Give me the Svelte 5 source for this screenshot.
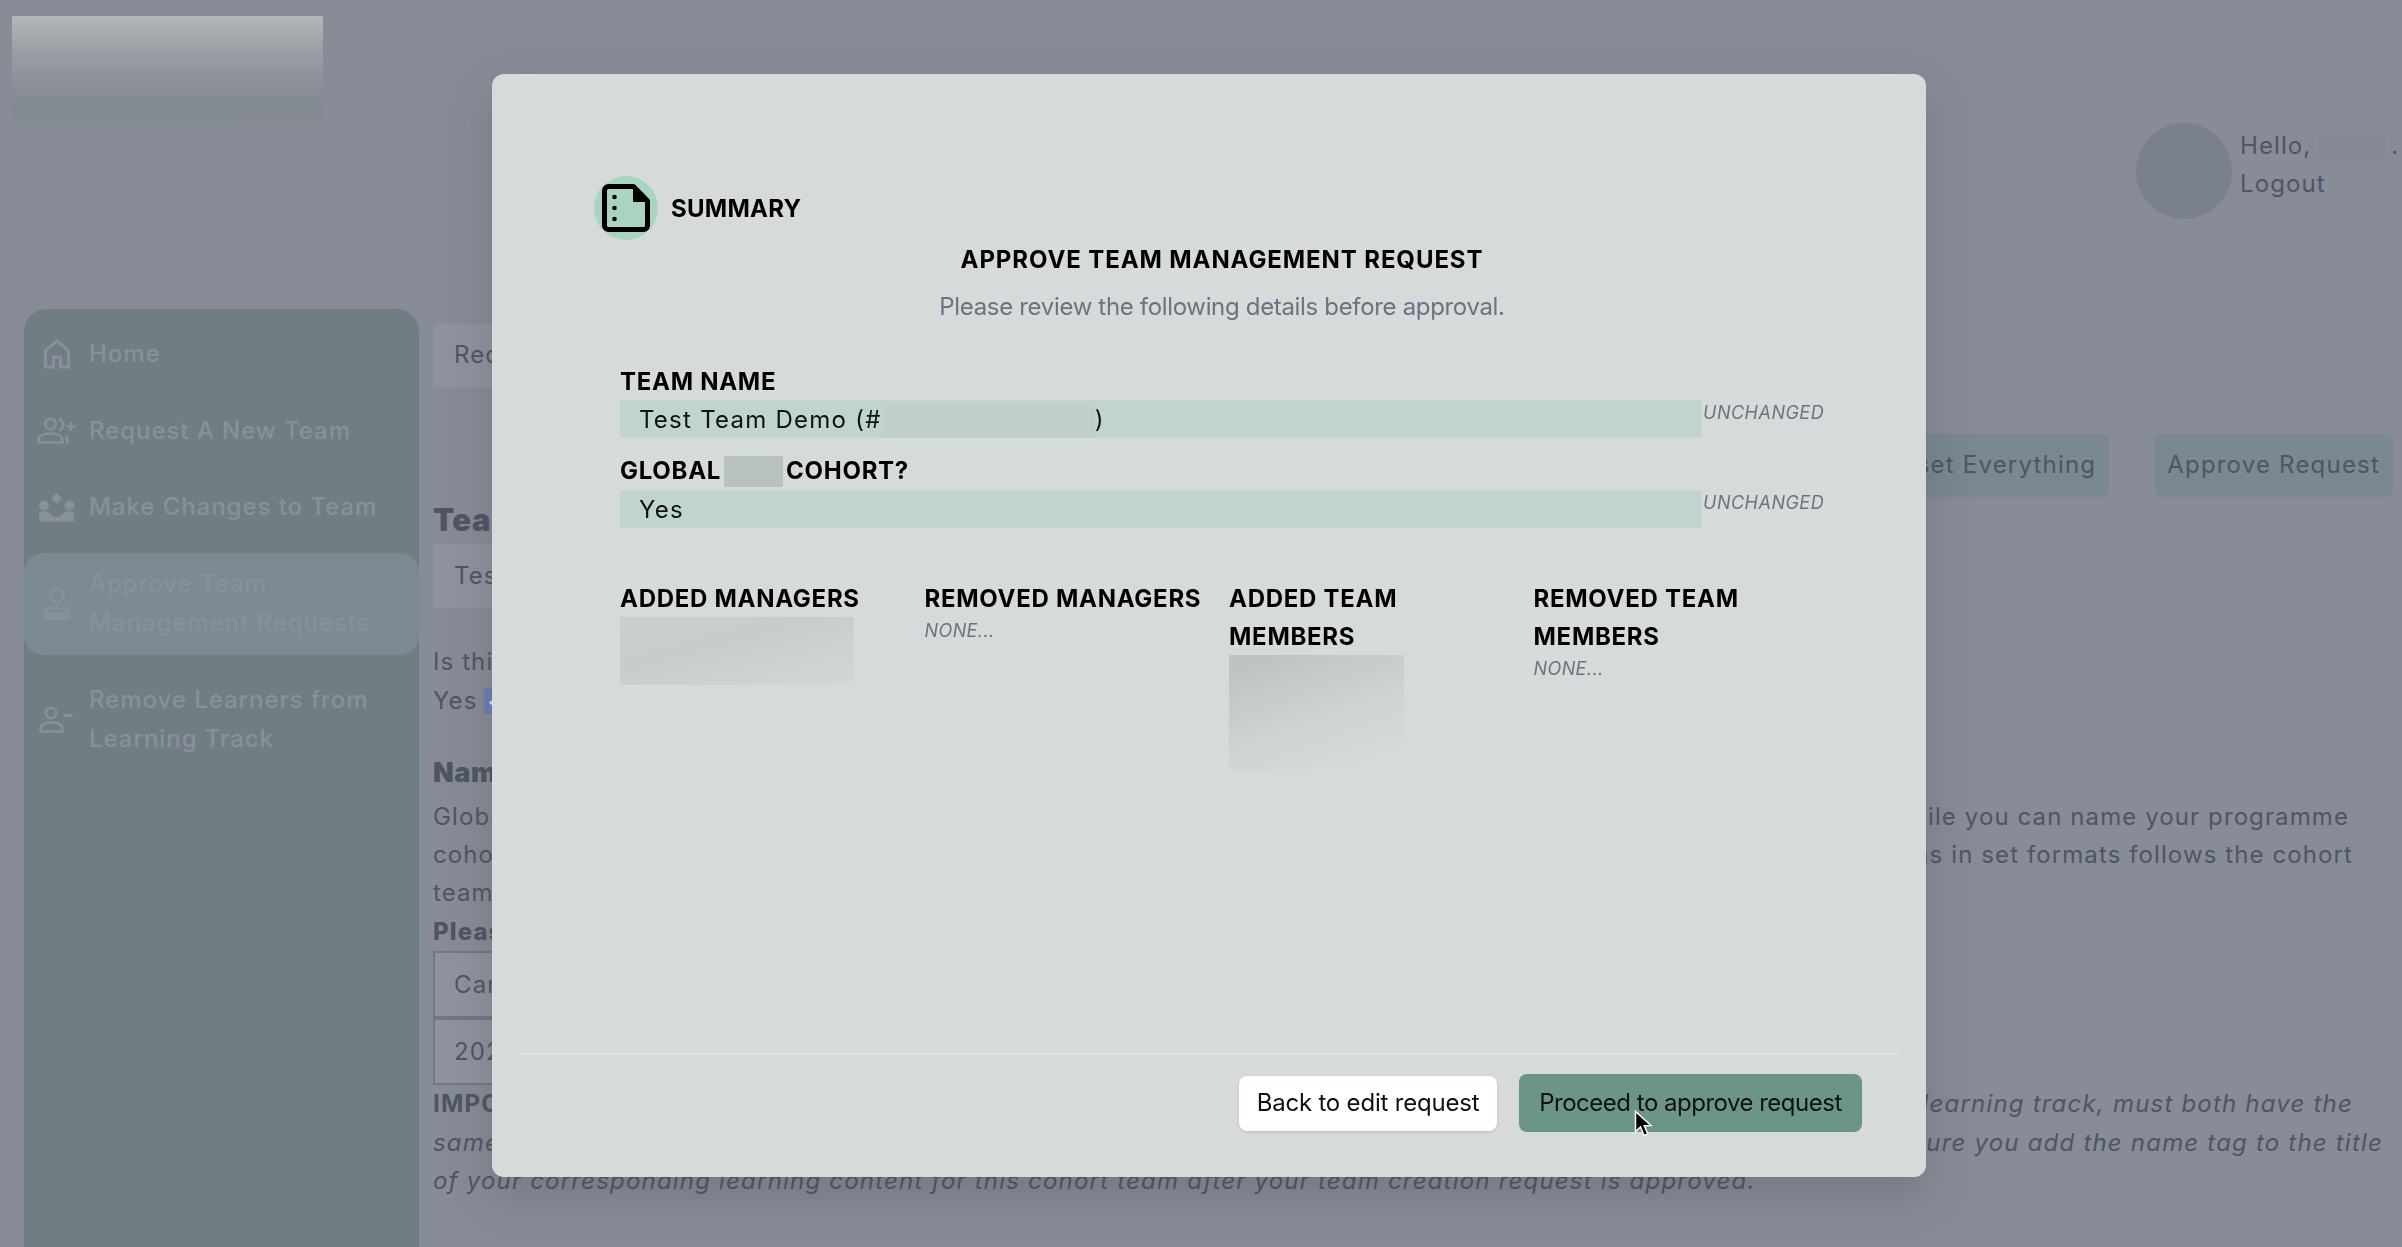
<script>
  const navItems = [
    { label: ['Home'], icon: 'home' },
    { label: ['Request A New Team'], icon: 'add' },
    { label: ['Make Changes to Team'], icon: 'group' },
    { label: ['Approve Team', 'Management Requests'], icon: 'stamp', active: true },
    { label: ['Remove Learners from', 'Learning Track'], icon: 'remove' }
  ];

  const changes = [
    { title: 'ADDED MANAGERS', blur: 'managers' },
    { title: 'REMOVED MANAGERS' },
    { title: 'ADDED TEAM MEMBERS', blur: 'members' },
    { title: 'REMOVED TEAM MEMBERS' }
  ];
</script>

<div class="page">
  <header class="topbar">
    <div class="logo"></div>
    <div class="user">
      <div class="avatar"></div>
      <div class="hello">
        <div class="hello-line">Hello,<span class="name"></span>.</div>
        <div>Logout</div>
      </div>
    </div>
  </header>

  <div class="layout">
    <nav class="sidebar">
      {#each navItems as item}
        <a class="nav-item" class:active={item.active} class:double={item.label.length > 1}>
          <span class="nav-icon">
            {#if item.icon === 'home'}
              <svg width="28" height="30" viewBox="0 0 28 30" fill="none" stroke="currentColor" stroke-width="3"><path d="M2.500 28V11.500L14 2l11.500 9.500V28H17.500V18h-7v10z" /></svg>
            {:else if item.icon === 'add'}
              <svg width="40" height="27" viewBox="0 0 40 27" fill="none" stroke="currentColor" stroke-width="2.600"><circle cx="13.500" cy="7" r="5.200" /><path d="M1.500 25.500v-2c0-4.500 5-7 12-7s12 2.500 12 7v2z" /><path d="M22 1.500c2.500 1 4 3.300 4 6s-1.500 5-4 6M29 19c1 1.500 1.500 3.500 1.500 7.500M33.700 5v9M29.200 9.500h9" /></svg>
            {:else if item.icon === 'group'}
              <svg width="36" height="29" viewBox="0 0 36 29" fill="currentColor"><path d="M17.500 0l5.500 5.500-5.500 5.500-5.500-5.500z" /><circle cx="5" cy="12.500" r="5" /><circle cx="30.500" cy="12.500" r="5" /><path d="M0 28.500v-7c0-2.500 2-3.500 5-3.500 3.500 0 5 1.500 7 3.500 2 1.800 3.700 2.500 5.500 2.500s3.500-.7 5.500-2.500c2-2 3.500-3.500 7-3.500 3 0 5 1 5 3.500v7z" /></svg>
            {:else if item.icon === 'stamp'}
              <svg width="28" height="32" viewBox="0 0 28 32" fill="none" stroke="currentColor" stroke-width="2.600"><path d="M14 15.500c-3-3-6.500-5-6.500-8.500a6.500 6.500 0 0 1 13 0c0 3.500-3.500 5.500-6.500 8.500zM14 15.500v4" /><path d="M2 20.500h24V31H2z" /><path d="M2 27.500h24" stroke-width="6" /></svg>
            {:else}
              <svg width="36" height="27" viewBox="0 0 36 27" fill="none" stroke="currentColor" stroke-width="2.600"><circle cx="12" cy="7" r="5.200" /><path d="M1.500 25.500v-2c0-4.500 4-7 11-7s11 2.500 11 7v2z" /><path d="M24.500 9.500h9" stroke-width="3" /></svg>
            {/if}
          </span>
          <span class="nav-label">
            {#each item.label as line}<span class="nav-line">{line}</span>{/each}
          </span>
        </a>
      {/each}
    </nav>

    <main class="content">
      <div class="field first">Request to manage a team</div>
      <div class="actions">
        <button class="ghost">Reset Everything</button>
        <button class="ghost">Approve Request</button>
      </div>
      <h2>Team Name</h2>
      <div class="field plain">Test Team Demo</div>
      <div class="block">
        <div>Is this a Global cohort team?</div>
        <div class="yes">Yes
          <span class="check">
            <svg width="26" height="26" viewBox="0 0 26 26" fill="none" stroke="#dfe3ee" stroke-width="3"><path d="M6 13.500l5 5 9-10" /></svg>
          </span>
        </div>
      </div>
      <h3>Name Tag</h3>
      <div class="split end-a"><span>Global cohort teams are named in a set format</span><span>while you can name your programme</span></div>
      <div class="split end-b"><span>cohort teams as you like, and naming teams</span><span>teams in set formats follows the cohort</span></div>
      <div>team name.</div>
      <div class="strong">Please select your team details</div>
      <div class="field box">Career Track</div>
      <div class="field box">2024</div>
      <div class="split italic end-d"><strong>IMPORTANT:</strong><em>your team and corresponding learning track, must both have the</em></div>
      <div class="split italic end-c"><em>same name tag to be matched correctly. Please make sure</em><em>sure you add the name tag to the title</em></div>
      <div class="italic"><em>of your corresponding learning content for this cohort team after your team creation request is approved.</em></div>
    </main>
  </div>
</div>

<div class="overlay">
  <section class="modal">
    <div class="modal-body">
      <div class="summary">
        <span class="summary-icon">
          <svg width="48" height="48" viewBox="0 0 48 48" fill="none" stroke="#000" stroke-width="5" stroke-linejoin="round">
            <path d="M6.500 2.500h25L45.500 17v24.500a4 4 0 0 1-4 4h-35a4 4 0 0 1-4-4v-35a4 4 0 0 1 4-4z" />
            <path d="M32 2.500l13.500 14.500H32z" fill="#000" stroke-width="2" />
            <circle cx="12.500" cy="13" r="2.300" fill="#000" stroke="none" />
            <circle cx="12.500" cy="24" r="2.300" fill="#000" stroke="none" />
            <circle cx="12.500" cy="35" r="2.300" fill="#000" stroke="none" />
          </svg>
        </span>
        <span class="summary-title">SUMMARY</span>
      </div>

      <div class="intro">
        <h1>APPROVE TEAM MANAGEMENT REQUEST</h1>
        <p>Please review the following details before approval.</p>
      </div>

      <div class="label first-label">TEAM NAME</div>
      <div class="row">
        <div class="value">Test Team Demo (#<span class="blur-id"></span>)</div>
        <span class="tag">UNCHANGED</span>
      </div>

      <div class="label second-label">GLOBAL<span class="blur-word"></span>COHORT?</div>
      <div class="row">
        <div class="value">Yes</div>
        <span class="tag">UNCHANGED</span>
      </div>

      <div class="columns">
        {#each changes as col}
          <div class="col">
            <div class="label">{col.title}</div>
            {#if col.blur}
              <div class="blur-{col.blur}"></div>
            {:else}
              <div class="none">NONE...</div>
            {/if}
          </div>
        {/each}
      </div>
    </div>

    <footer class="modal-footer">
      <button class="btn-back">Back to edit request</button>
      <button class="btn-go">Proceed to approve request</button>
    </footer>
  </section>

  <svg class="cursor" width="20" height="28" viewBox="0 0 20 28">
    <path d="M1.500 1.500v20l5-4.500 3.500 8.500 3.800-1.600-3.500-8.200 6.700-.2z" fill="#000" stroke="#fff" stroke-width="1.500" />
  </svg>
</div>

<style>
  :global(body) {
    margin: 0;
    background: #888c96;
    overflow: hidden;
  }

  .page {
    height: 1247px;
    overflow: hidden;
    background: #888c96;
    color: #4f5562;
    font-family: Inter, "Liberation Sans", sans-serif;
    font-size: 24px;
    line-height: 38.4px;
    letter-spacing: 1.1px;
  }

  .topbar {
    height: 309px;
    box-sizing: border-box;
    padding: 16px 0 0 12px;
    display: flex;
    justify-content: space-between;
    align-items: flex-start;
  }

  .logo {
    width: 311px;
    height: 115px;
    background: linear-gradient(#b3b6ba 0%, #a0a4a7 24%, #8f939c 50%, #82898f 80%, #888c96 100%);
  }

  .user {
    display: flex;
    gap: 8px;
    margin-top: 107px;
    width: 266px;
  }

  .avatar {
    width: 96px;
    height: 96px;
    flex: none;
    border-radius: 50%;
    background: #7b808d;
  }

  .hello {
    margin-top: 4px;
  }

  .hello-line {
    display: flex;
    align-items: center;
    white-space: nowrap;
  }

  .name {
    width: 70px;
    height: 26px;
    margin-left: 6px;
    margin-right: 4px;
    background: #858a95;
  }

  .layout {
    display: flex;
    gap: 14px;
    padding-left: 24px;
    height: 938px;
  }

  .sidebar {
    width: 395px;
    flex: none;
    box-sizing: border-box;
    padding-top: 7px;
    background: #707e84;
    border-radius: 22px 22px 0 0;
    color: #8a9099;
    font-weight: 500;
    letter-spacing: .95px;
  }

  .nav-item {
    display: flex;
    align-items: center;
    height: 76.500px;
    padding-left: 13px;
    gap: 12px;
  }

  .nav-item.double {
    height: 102px;
    margin-top: 7px;
  }

  .nav-item.active {
    background: #7c8a92;
    border-radius: 20px;
    color: #86929b;
  }

  .nav-item:last-child {
    height: 116px;
  }

  .nav-icon {
    width: 40px;
    flex: none;
    display: flex;
    justify-content: center;
  }

  .nav-line {
    display: block;
    white-space: nowrap;
  }

  .content {
    flex: 1;
    min-width: 0;
    padding-right: 9px;
    white-space: nowrap;
  }

  .field {
    height: 64px;
    width: 600px;
    box-sizing: border-box;
    padding: 0 21px;
    line-height: 64px;
    background: #8f939e;
  }

  .field.first {
    margin-top: 14px;
    border-radius: 8px;
  }

  .field.plain {
    margin-top: 5px;
  }

  .field.box {
    height: 67px;
    line-height: 64px;
    border: 2px solid #727784;
    padding-left: 19px;
  }

  .actions {
    display: flex;
    justify-content: flex-end;
    gap: 45px;
    margin-top: 47px;
  }

  .ghost {
    height: 63px;
    padding: 0 13px;
    border: none;
    border-radius: 8px;
    background: #7a888f;
    color: #4f5562;
    font: inherit;
    letter-spacing: 1.2px;
  }

  h2 {
    margin: 4px 0 0;
    font-size: 31px;
    font-weight: 900;
    line-height: 38.400px;
    letter-spacing: .5px;
  }

  .block {
    margin-top: 35px;
  }

  .yes {
    display: flex;
    align-items: center;
    gap: 7px;
  }

  .check {
    width: 26px;
    height: 26px;
    display: flex;
    background: #6a7fb5;
  }

  h3 {
    margin: 34px 0 5px;
    font-size: 27px;
    font-weight: 900;
    line-height: 38.400px;
    letter-spacing: .5px;
  }

  .strong {
    font-weight: 800;
  }

  .split {
    display: flex;
    justify-content: space-between;
  }

  .italic {
    letter-spacing: 1.2px;
  }

  .end-a { padding-right: 44px; }
  .end-b { padding-right: 40px; }
  .end-c { padding-right: 10px; }
  .end-d { padding-right: 40px; }

  .overlay {
    position: fixed;
    inset: 0;
    font-family: Inter, "Liberation Sans", sans-serif;
    font-size: 24px;
    line-height: 38px;
    color: #000;
  }

  .modal {
    position: absolute;
    left: 492px;
    top: 74px;
    width: 1434px;
    height: 1103px;
    display: flex;
    flex-direction: column;
    background: #d6dadb;
    border-radius: 12px;
    box-shadow: 0 20px 50px rgba(60, 64, 72, .25);
  }

  .modal-body {
    flex: 1;
    padding: 102px 0 0 128px;
  }

  .summary {
    display: flex;
    align-items: center;
    gap: 13px;
    margin-left: -26px;
    height: 64px;
  }

  .summary-icon {
    width: 64px;
    height: 64px;
    display: flex;
    align-items: center;
    justify-content: center;
    background: #a8d4c0;
    border-radius: 50%;
  }

  .summary-title {
    padding-top: 2px;
    font-weight: 700;
    letter-spacing: .25px;
  }

  .label {
    font-weight: 700;
    letter-spacing: .72px;
    white-space: normal;
  }

  .intro {
    width: 1204px;
    margin-top: 1px;
    text-align: center;
  }

  h1 {
    margin: 0;
    font: inherit;
    font-weight: 700;
    letter-spacing: .9px;
  }

  .intro p {
    margin: 9px 0 0;
    color: #6b7280;
    letter-spacing: -.33px;
  }

  .first-label {
    margin-top: 36px;
    height: 38px;
    line-height: 40px;
  }

  .second-label {
    margin-top: 14px;
    display: flex;
    align-items: center;
  }

  .blur-word {
    width: 59px;
    height: 31px;
    margin: 0 3px 0 3px;
    background: #b8c2c0;
  }

  .row {
    display: flex;
    align-items: flex-start;
    gap: 1px;
  }

  .value {
    width: 1082px;
    height: 38px;
    box-sizing: border-box;
    padding-left: 19px;
    display: flex;
    background: #c0d5ce;
    color: #111;
    line-height: 40px;
    letter-spacing: 1.25px;
  }

  .blur-id {
    width: 213px;
    height: 33px;
    margin-top: 5px;
    background: #c3cfcc;
  }

  .tag {
    font-size: 18px;
    font-style: italic;
    line-height: 26px;
    letter-spacing: .5px;
    color: #6b7280;
  }

  .columns {
    display: grid;
    grid-template-columns: repeat(4, 304.500px);
    margin-top: 52px;
  }

  .col {
    padding-right: 20px;
  }

  .blur-managers {
    width: 234px;
    height: 68px;
    margin-top: -1px;
    background: linear-gradient(165deg, #cbcfcf, #c8cccc 40%, #d3d7d8);
  }

  .blur-members {
    width: 175px;
    height: 115px;
    margin-top: -1px;
    background: linear-gradient(160deg, #bfc3c3 10%, #cfd3d4 55%, #d6dadb 90%);
  }

  .none {
    font-size: 18px;
    font-style: italic;
    line-height: 26px;
    letter-spacing: .4px;
    color: #6b7280;
  }

  .modal-footer {
    margin: 0 26px;
    padding: 19px 38px 45px 0;
    display: flex;
    justify-content: flex-end;
    align-items: center;
    gap: 22px;
    border-top: 2px solid #e0e3e5;
  }

  .modal-footer button {
    border: none;
    border-radius: 8px;
    font: inherit;
    color: #111;
    padding: 0;
  }

  .btn-back {
    width: 258px;
    height: 55px;
    background: #fff;
    box-shadow: 0 1px 3px rgba(0, 0, 0, .15);
    letter-spacing: -.2px;
  }

  .btn-go {
    width: 343px;
    height: 58px;
    background: #6b9686;
    letter-spacing: -.5px;
  }

  .cursor {
    position: absolute;
    left: 1634px;
    top: 1110px;
  }
</style>
